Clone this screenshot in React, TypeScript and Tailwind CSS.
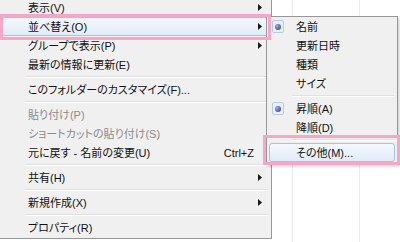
import React from 'react';

type Entry =
  | { kind: 'item'; label: string; sub?: boolean; disabled?: boolean; shortcut?: string; hot?: boolean; checked?: boolean }
  | { kind: 'sep' };

const mainItems: Entry[] = [
  { kind: 'item', label: '表示(V)', sub: true },
  { kind: 'item', label: '並べ替え(O)', sub: true, hot: true },
  { kind: 'item', label: 'グループで表示(P)', sub: true },
  { kind: 'item', label: '最新の情報に更新(E)' },
  { kind: 'sep' },
  { kind: 'item', label: 'このフォルダーのカスタマイズ(F)...' },
  { kind: 'sep' },
  { kind: 'item', label: '貼り付け(P)', disabled: true },
  { kind: 'item', label: 'ショートカットの貼り付け(S)', disabled: true },
  { kind: 'item', label: '元に戻す - 名前の変更(U)', shortcut: 'Ctrl+Z' },
  { kind: 'sep' },
  { kind: 'item', label: '共有(H)', sub: true },
  { kind: 'sep' },
  { kind: 'item', label: '新規作成(X)', sub: true },
  { kind: 'sep' },
  { kind: 'item', label: 'プロパティ(R)' },
];

const sortItems: Entry[] = [
  { kind: 'item', label: '名前', checked: true },
  { kind: 'item', label: '更新日時' },
  { kind: 'item', label: '種類' },
  { kind: 'item', label: 'サイズ' },
  { kind: 'sep' },
  { kind: 'item', label: '昇順(A)', checked: true },
  { kind: 'item', label: '降順(D)' },
  { kind: 'sep' },
  { kind: 'item', label: 'その他(M)...', hot: true },
];

const Arrow = () => (
  <svg width="4" height="7" viewBox="0 0 4 7" className="ml-auto mr-[6px]">
    <path d="M0 0 L4 3.5 L0 7 Z" fill="#1a1a1a" />
  </svg>
);

const MenuList = ({ items, textLeft }: { items: Entry[]; textLeft: string }) => (
  <>
    {items.map((it, i) =>
      it.kind === 'sep' ? (
        <div key={i} className="h-[6px] flex flex-col justify-center ml-[25px] mr-[3px]">
          <div className="h-px bg-[#e0e0e0]" />
          <div className="h-px bg-white" />
        </div>
      ) : (
        <div
          key={i}
          className={`relative mx-[2px] h-[19px] flex items-center border rounded-[3px] ${textLeft} ${
            it.hot
              ? 'border-[#a9c2e2] bg-gradient-to-b from-[#f4f8fd] to-[#e1ebf8]'
              : 'border-transparent'
          } ${it.disabled ? 'text-[#8a8a8a]' : 'text-[#111]'}`}
        >
          {it.checked && (
            <div className="absolute left-[2px] top-[2px] w-[12px] h-[13px] rounded-[2px] border border-[#b4cbe8] bg-[#e8f0fb] flex items-center justify-center">
              <div className="w-[6px] h-[6px] rounded-full bg-[radial-gradient(circle_at_35%_35%,#a2a8ec,#2a3285)]" />
            </div>
          )}
          <span className="whitespace-nowrap leading-none pt-px">{it.label}</span>
          {it.shortcut && <span className="ml-auto mr-[14px] leading-none pt-px">{it.shortcut}</span>}
          {it.sub && <Arrow />}
        </div>
      )
    )}
  </>
);

export default function App() {
  return (
    <div className="relative flex w-[400px] h-[242px] overflow-hidden bg-white font-['Liberation_Sans','Noto_Sans_CJK_JP',sans-serif] [font-feature-settings:'palt'] text-[11px]">
      {/* context menu */}
      <div className="-mt-[2px] self-start w-[272px] shrink-0 bg-[#f0f0f0] border-r border-b border-[#979797] pb-[1px]">
        <MenuList items={mainItems} textLeft="pl-[25px]" />
      </div>

      {/* explorer columns behind */}
      <div className="w-[21px] border-r border-[#e8ecf2]" />
      <div className="w-[67px] border-r border-[#e8ecf2]" />
      <div className="flex-1" />

      {/* sort submenu */}
      <div className="absolute left-[266px] top-[16px] w-[132px] bg-[#f0f0f0] border border-[#979797] pb-[2px] shadow-[2px_2px_2px_rgba(0,0,0,0.15)]">
        <MenuList items={sortItems} textLeft="pl-[26px]" />
      </div>

      {/* pink annotations */}
      <div className="absolute left-0 top-[14px] w-[271px] h-[26px] border-[3px] border-[#f4a7c7]" />
      <div className="absolute left-[263px] top-[135px] w-[137px] h-[30px] border-[3px] border-[#f4a7c7]" />
    </div>
  );
}
